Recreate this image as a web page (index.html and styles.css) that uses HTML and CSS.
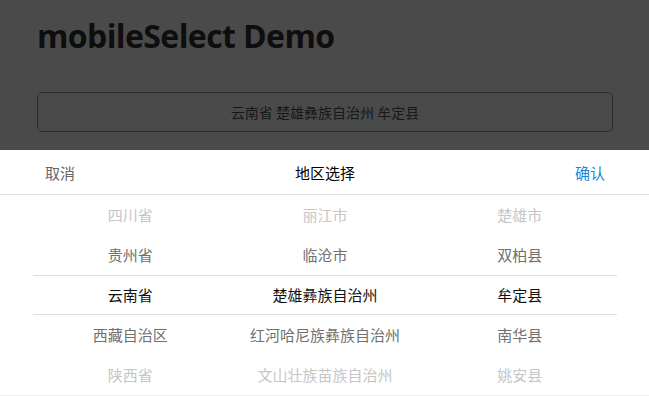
FILE: index.html
```html
<!DOCTYPE html>
<html lang="zh">
<head>
<meta charset="utf-8">
<title>mobileSelect Demo</title>
<link rel="stylesheet" href="styles.css">
</head>
<body>
<main class="page">
  <h1 class="title">mobileSelect Demo</h1>
  <div class="trigger">云南省 楚雄彝族自治州 牟定县</div>
</main>

<div class="mask"></div>

<section class="picker">
  <header class="picker-bar">
    <span class="btn cancel">取消</span>
    <span class="picker-title">地区选择</span>
    <span class="btn ensure">确认</span>
  </header>
  <div class="wheels">
    <div class="selectline"></div>
    <ul class="wheel">
      <li class="far">四川省</li>
      <li class="near">贵州省</li>
      <li class="cur">云南省</li>
      <li class="near">西藏自治区</li>
      <li class="far">陕西省</li>
    </ul>
    <ul class="wheel">
      <li class="far">丽江市</li>
      <li class="near">临沧市</li>
      <li class="cur">楚雄彝族自治州</li>
      <li class="near">红河哈尼族彝族自治州</li>
      <li class="far">文山壮族苗族自治州</li>
    </ul>
    <ul class="wheel">
      <li class="far">楚雄市</li>
      <li class="near">双柏县</li>
      <li class="cur">牟定县</li>
      <li class="near">南华县</li>
      <li class="far">姚安县</li>
    </ul>
  </div>
</section>
</body>
</html>
```

FILE: styles.css
```css
* { box-sizing: border-box; }
html, body { margin: 0; padding: 0; }
body {
  background: #fff;
  font-family: "Noto Sans", "Noto Sans CJK SC", sans-serif;
  height: 396px;
  overflow: hidden;
}
.page {
  padding: 14px 37px 0 37px;
}
.title {
  margin: 0;
  font-family: "Open Sans", "Noto Sans", sans-serif;
  font-weight: 700;
  font-size: 32px;
  line-height: 44px;
  letter-spacing: -0.6px;
  color: #333;
}
.trigger {
  margin-top: 34px;
  width: 576px;
  height: 40px;
  border: 1px solid #999;
  border-radius: 5px;
  display: flex;
  align-items: center;
  justify-content: center;
  font-family: "Noto Sans CJK SC", sans-serif;
  font-size: 14px;
  color: #555;
}
.mask {
  position: fixed;
  inset: 0;
  background: rgba(0, 0, 0, 0.71);
}
.picker {
  position: fixed;
  left: 0;
  right: 0;
  bottom: 0;
  height: 246px;
  background: #fff;
  font-family: "Noto Sans CJK SC", sans-serif;
}
.picker-bar {
  height: 45px;
  border-bottom: 1px solid #e0e0e0;
  display: flex;
  align-items: center;
  justify-content: space-between;
  padding: 0 44px 0 45px;
  font-size: 15px;
}
.btn { width: 60px; }
.cancel { color: #666; }
.ensure { color: #1e83d3; text-align: right; }
.picker-title { color: #000; }
.wheels {
  position: relative;
  display: flex;
  padding: 0 32px 0 33px;
  border-bottom: 1px solid #eee;
}
.selectline {
  position: absolute;
  left: 33px;
  right: 32px;
  top: 80px;
  height: 40px;
  border-top: 1px solid #ddd;
  border-bottom: 1px solid #ddd;
}
.wheel {
  flex: 1;
  list-style: none;
  margin: 0;
  padding: 0;
}
.wheel li {
  height: 40px;
  line-height: 40px;
  text-align: center;
  font-size: 15px;
}
.far { color: #c6c6c6; }
.near { color: #707070; }
.cur { color: #111; }
```
